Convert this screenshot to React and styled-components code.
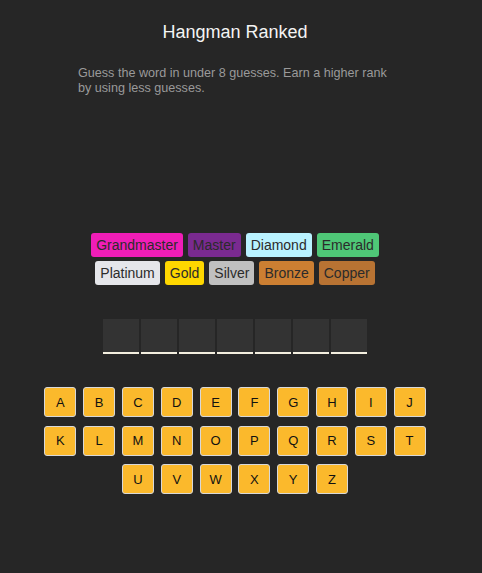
import React from "react";
import styled, { createGlobalStyle } from "styled-components";

const GlobalStyle = createGlobalStyle`
	body {
		margin: 0;
		background: #262626;
		font-family: "Liberation Sans", Arial, sans-serif;
	}
`;

const Page = styled.div`
	width: 470px;
	min-height: 573px;
	display: flex;
	flex-direction: column;
	align-items: center;
`;

const Title = styled.h1`
	margin: 21px 0 0;
	color: #f4f4f4;
	font-size: 18px;
	font-weight: 400;
	line-height: 22px;
`;

const Description = styled.p`
	width: 314px;
	margin: 23px 0 0;
	color: #9a9a9a;
	font-size: 12.6px;
	line-height: 15px;
`;

const Ranks = styled.div`
	margin-top: 137px;
	display: flex;
	flex-direction: column;
	align-items: center;
	gap: 4px;
`;

const RankRow = styled.div`
	display: flex;
	gap: 5px;
`;

const Rank = styled.span`
	padding: 0 5px;
	height: 24px;
	line-height: 24px;
	border-radius: 3px;
	background: ${props => props.color};
	color: #2b2b2b;
	font-size: 14px;
`;

const Word = styled.div`
	margin-top: 34px;
	display: flex;
	gap: 2px;
`;

const Slot = styled.div`
	width: 36px;
	height: 33px;
	background: #333333;
	border-bottom: 2px solid #f3eedf;
`;

const Keyboard = styled.div`
	margin-top: 33px;
	display: flex;
	flex-direction: column;
	align-items: center;
	gap: 8.5px;
`;

const KeyRow = styled.div`
	display: flex;
	gap: 6.8px;
`;

const Key = styled.button`
	width: 32px;
	height: 30px;
	padding: 0;
	border: 1px solid #d8d8d8;
	border-radius: 3px;
	background: #fbb92c;
	color: #111;
	font-family: "Liberation Sans", Arial, sans-serif;
	font-size: 13px;
`;

const rankRows = [
	[
		["Grandmaster", "#f01db7"],
		["Master", "#7a2a90"],
		["Diamond", "#b9f2ff"],
		["Emerald", "#4fc777"]
	],
	[
		["Platinum", "#e5e6ea"],
		["Gold", "#ffd700"],
		["Silver", "#c0c0c0"],
		["Bronze", "#cc7f32"],
		["Copper", "#b87333"]
	]
];

const keyRows = ["ABCDEFGHIJ", "KLMNOPQRST", "UVWXYZ"];

export default function App() {
	return (
		<Page>
			<GlobalStyle />
			<Title>Hangman Ranked</Title>
			<Description>
				Guess the word in under 8 guesses. Earn a higher rank by using less
				guesses.
			</Description>
			<Ranks>
				{rankRows.map((row, i) => (
					<RankRow key={i}>
						{row.map(([name, color]) => (
							<Rank key={name} color={color}>
								{name}
							</Rank>
						))}
					</RankRow>
				))}
			</Ranks>
			<Word>
				{Array.from({ length: 7 }).map((_, i) => (
					<Slot key={i} />
				))}
			</Word>
			<Keyboard>
				{keyRows.map(row => (
					<KeyRow key={row}>
						{row.split("").map(letter => (
							<Key key={letter}>{letter}</Key>
						))}
					</KeyRow>
				))}
			</Keyboard>
		</Page>
	);
}
